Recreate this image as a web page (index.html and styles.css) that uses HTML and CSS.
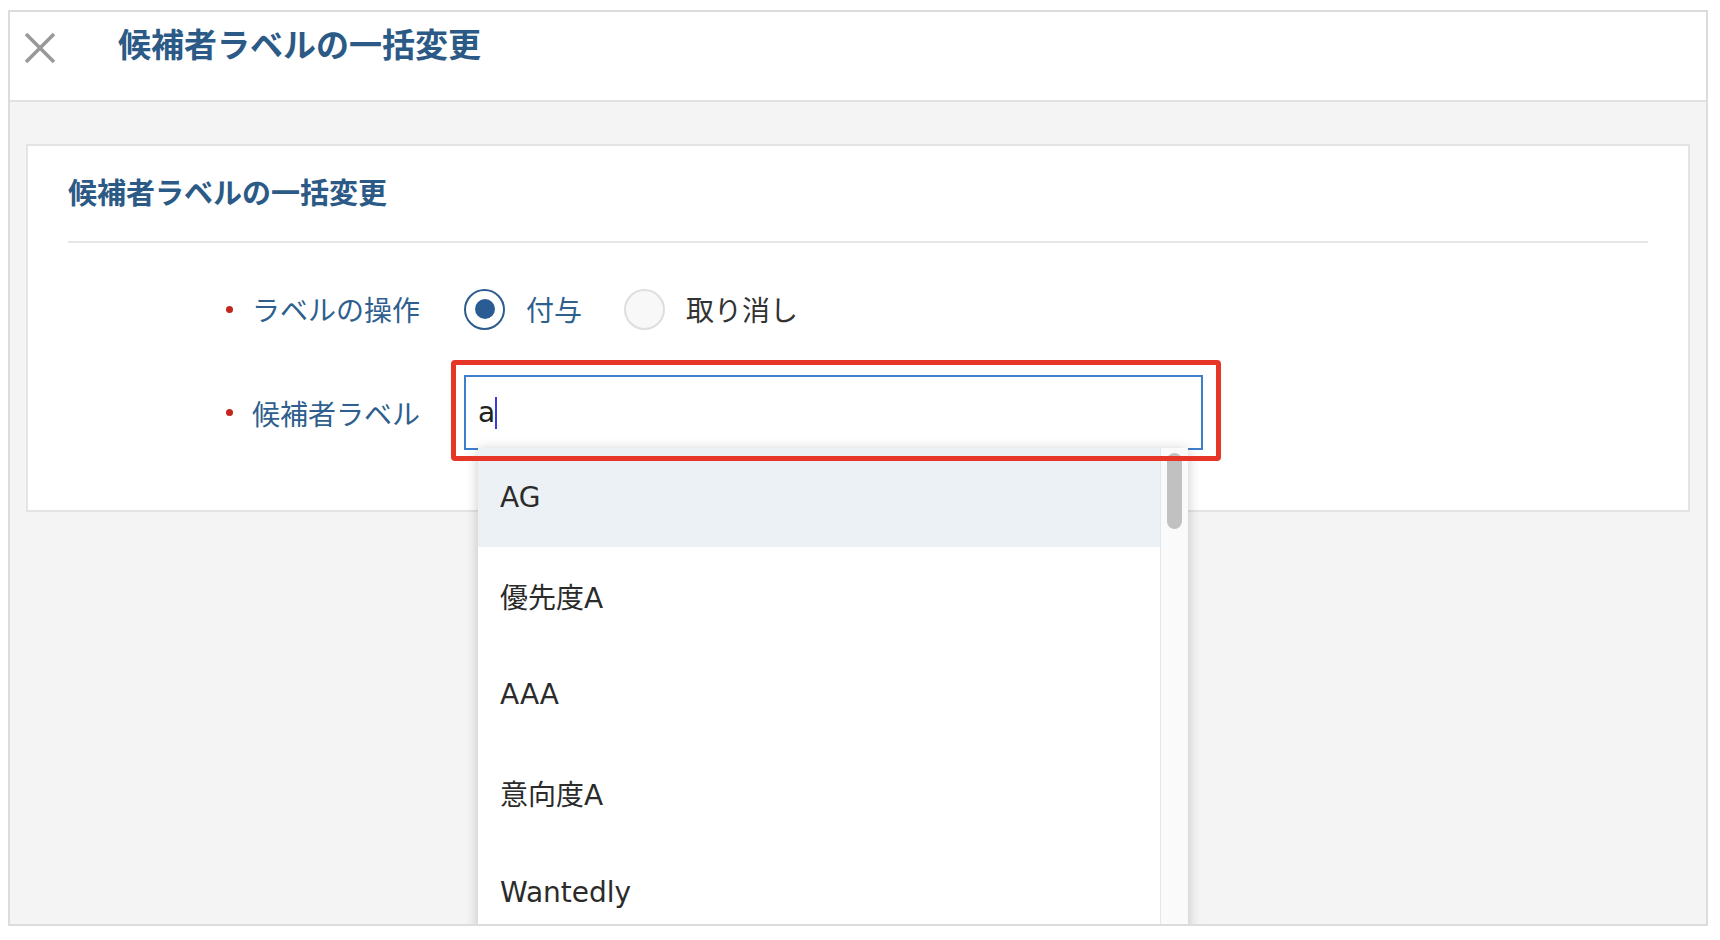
FILE: index.html
```html
<!DOCTYPE html>
<html lang="ja">
<head>
<meta charset="utf-8">
<title>候補者ラベルの一括変更</title>
<link rel="stylesheet" href="styles.css">
</head>
<body>
<div class="frame">
  <header class="topbar">
    <span class="close" aria-label="閉じる">
      <svg width="32" height="32" viewBox="0 0 32 32"><path d="M2 2 L30 30 M30 2 L2 30" stroke="#999999" stroke-width="3.5" fill="none"/></svg>
    </span>
    <h1 class="title">候補者ラベルの一括変更</h1>
  </header>
  <main class="content">
    <section class="card">
      <h2 class="card-title">候補者ラベルの一括変更</h2>
      <div class="divider"></div>
      <div class="row row-op">
        <div class="label"><span class="dot"></span><span>ラベルの操作</span></div>
        <div class="radios">
          <label class="radio checked"><span class="circle"><span class="inner"></span></span><span class="radio-text">付与</span></label>
          <label class="radio"><span class="circle"></span><span class="radio-text">取り消し</span></label>
        </div>
      </div>
      <div class="row row-input">
        <div class="label"><span class="dot"></span><span>候補者ラベル</span></div>
        <div class="field">
          <div class="input">a<span class="caret"></span></div>
          <div class="dropdown">
            <ul class="options">
              <li class="option active">AG</li>
              <li class="option">優先度A</li>
              <li class="option">AAA</li>
              <li class="option">意向度A</li>
              <li class="option">Wantedly</li>
            </ul>
            <div class="scrollbar"><div class="thumb"></div></div>
          </div>
          <div class="highlight"></div>
        </div>
      </div>
    </section>
  </main>
</div>
</body>
</html>
```
FILE: styles.css
```css
* { box-sizing: border-box; }
html, body { margin: 0; padding: 0; }
body {
  background: #ffffff;
  font-family: "DejaVu Sans", "Noto Sans CJK JP", sans-serif;
  color: #333;
}
.frame {
  margin: 10px 0 0 8px;
  width: 1700px;
  height: 916px;
  border: 2px solid #dcdcdc;
  background: #f4f4f4;
  overflow: hidden;
  display: flex;
  flex-direction: column;
}
.topbar {
  height: 90px;
  flex: none;
  background: #fff;
  border-bottom: 2px solid #e2e2e2;
  display: flex;
  align-items: flex-start;
  padding: 11px 0 0 14px;
}
.close {
  display: block;
  width: 32px;
  height: 32px;
  margin-top: 9px;
}
.close svg { display: block; }
.title {
  margin: 0 0 0 62px;
  font-family: "Noto Sans CJK JP", sans-serif;
  font-weight: 700;
  font-size: 33px;
  line-height: 40px;
  color: #2c5a86;
}
.content {
  flex: 1;
  padding: 42px 16px 0 16px;
}
.card {
  height: 368px;
  background: #fff;
  border: 2px solid #e4e4e4;
  padding: 25px 40px 0 40px;
}
.card-title {
  margin: 0;
  font-family: "Noto Sans CJK JP", sans-serif;
  font-weight: 700;
  font-size: 29px;
  line-height: 40px;
  color: #2c5a86;
}
.divider {
  margin-top: 30px;
  height: 2px;
  background: #e6e6e6;
}
.row {
  display: flex;
  align-items: center;
}
.row-op {
  margin-top: 36px;
  height: 60px;
}
.row-input {
  margin-top: 36px;
  height: 75px;
}
.label {
  width: 396px;
  padding-right: 44px;
  display: flex;
  justify-content: flex-end;
  align-items: center;
  gap: 19px;
  font-family: "Noto Sans CJK JP", sans-serif;
  font-size: 28px;
  line-height: 40px;
  color: #2f5f8e;
}
.dot {
  width: 7px;
  height: 7px;
  border-radius: 50%;
  background: #c4251c;
}
.radios {
  display: flex;
  align-items: center;
}
.radio {
  display: flex;
  align-items: center;
  gap: 21px;
  margin-right: 42px;
  font-family: "Noto Sans CJK JP", sans-serif;
  font-size: 28px;
  line-height: 40px;
  color: #333;
}
.radio.checked { color: #2f5f8e; }
.circle {
  width: 41px;
  height: 41px;
  border-radius: 50%;
  border: 2px solid #dedede;
  background: #f8f8f8;
  display: flex;
  align-items: center;
  justify-content: center;
}
.radio.checked .circle {
  border: 2.5px solid #2c5b8e;
  background: #fff;
}
.inner {
  width: 20px;
  height: 20px;
  border-radius: 50%;
  background: #2a5c94;
}
.field {
  position: relative;
  width: 739px;
  height: 75px;
}
.input {
  width: 100%;
  height: 100%;
  border: 2px solid #3d7fcb;
  background: #fff;
  padding-left: 12px;
  display: flex;
  align-items: center;
  font-size: 28px;
  color: #222;
}
.caret {
  display: inline-block;
  width: 0;
  height: 32px;
  margin-left: 0;
  border-left: 2px solid #3b3bd6;
}
.dropdown {
  position: absolute;
  top: 73px;
  left: 14px;
  width: 710px;
  height: 500px;
  background: #fff;
  box-shadow: 0 2px 12px rgba(0, 0, 0, 0.22);
  z-index: 2;
  display: flex;
}
.options {
  list-style: none;
  margin: 0;
  padding: 0;
  flex: 1;
}
.option {
  height: 98.7px;
  padding-left: 22px;
  display: flex;
  align-items: center;
  font-size: 28px;
  color: #2b2b2b;
}
.option.active { background: #ecf1f5; }
.scrollbar {
  width: 28px;
  flex: none;
  background: #fafafa;
  border-left: 1px solid #e6e6e6;
  padding: 5px 0 0 6px;
}
.thumb {
  width: 15px;
  height: 76px;
  border-radius: 8px;
  background: #c1c1c1;
}
.highlight {
  position: absolute;
  top: -15px;
  left: -13px;
  right: -18px;
  bottom: -11px;
  border: 5px solid #e63627;
  border-radius: 4px;
  z-index: 3;
}
```
